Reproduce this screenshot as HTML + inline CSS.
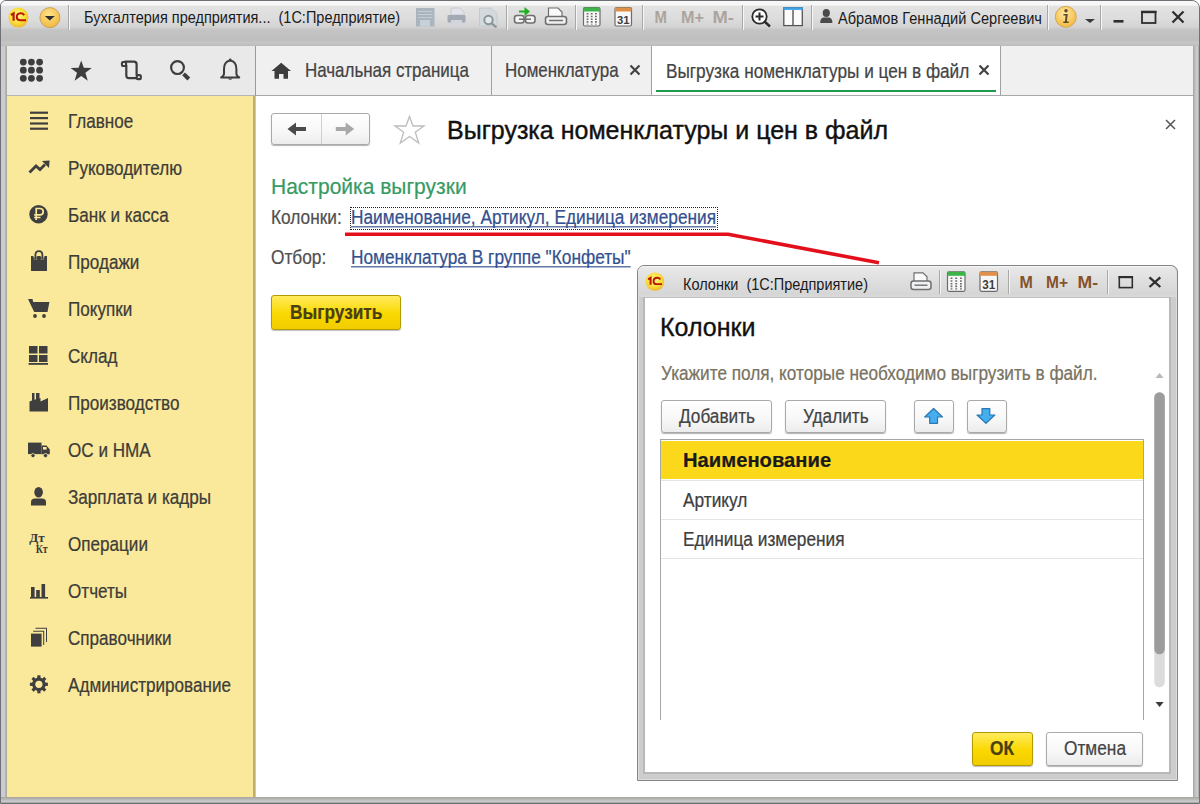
<!DOCTYPE html>
<html><head><meta charset="utf-8">
<style>
*{box-sizing:border-box;margin:0;padding:0}
html,body{width:1200px;height:804px;overflow:hidden;background:#fff}
body{position:relative;font-family:"Liberation Sans",sans-serif;color:#4a4a4a}
.abs{position:absolute}
.t{position:absolute;white-space:pre;line-height:1;transform:scaleY(1.14);transform-origin:0 0;-webkit-text-stroke:0.2px currentColor}
/* window frame */
#frame{left:0;top:0;width:1200px;height:804px;background:#c8c8cc;border:1px solid #6e7076;border-radius:6px 8px 0 0}
#titlebar{left:1px;top:1px;width:1198px;height:45px;background:linear-gradient(#f8f8f8 0px,#f6f6f6 4px,#e3e3e3 5.5px,#dcdcdc 18px,#d3d3d3 26px,#c4c4c4 29px,#bebebe 39px,#c6c6c6 41.5px,#bcbcbc 45px);border-radius:5px 7px 0 0}
#toolpanel{left:7px;top:46px;width:248px;height:50px;background:#e9e9e9;border-bottom:1px solid #b5b5b5}
#tabbar{left:255px;top:46px;width:939px;height:50px;background:#f0f0f0;border-bottom:1px solid #a8a8a8;border-left:1px solid #9a9a9a}
#sidebar{left:7px;top:96px;width:248px;height:701px;background:#fae99b;border-right:2px solid #bdb06c}
#content{left:256px;top:96px;width:938px;height:701px;background:#fff}
.tab{position:absolute;top:0;height:49px;border-right:1px solid #9c9c9c}
.sb{position:absolute;left:68px;font-size:17.1px;color:#3d3c38}
.sbi{position:absolute;left:28px}
.btn{position:absolute;border:1px solid #a9a9a9;border-radius:3px;background:linear-gradient(#ffffff,#f7f7f7 60%,#ececec);box-shadow:0 1px 1px rgba(0,0,0,.3)}
.ybtn{position:absolute;border:1px solid #b49a00;border-radius:3px;background:linear-gradient(#ffeb5c,#fad800 55%,#f1cc00);box-shadow:0 1px 1px rgba(0,0,0,.25)}
.link{color:#33508f;text-decoration:underline;text-decoration-skip-ink:none;text-decoration-thickness:1px;text-underline-offset:2px}
</style></head><body>
<div id="frame" class="abs"></div>
<div id="titlebar" class="abs"></div>
<div id="toolpanel" class="abs"></div>
<div id="tabbar" class="abs"></div>
<div id="sidebar" class="abs"></div>
<div id="content" class="abs"></div>
<div class="abs" style="left:1px;top:46px;width:6px;height:757px;background:linear-gradient(to right,#cbcbd3 0,#cbcbd3 3.5px,#b9b7ac 4.5px,#a8a592 6px)"></div>
<div class="abs" style="left:1193px;top:46px;width:6px;height:757px;background:linear-gradient(to right,#a4a4a4 0,#c4c4c4 2.5px,#d0d0d0 5px,#8c8c8c 6px)"></div>
<div class="abs" style="left:1px;top:797px;width:1198px;height:6px;background:linear-gradient(#a9a59b 0,#b5b5b5 2px,#c9c9c9 4px,#c9c9c9 5px,#8a8a8a 6px)"></div>



<!-- toolbar panel icons -->
<svg class="abs" style="left:15px;top:54px" width="34" height="34" viewBox="15 54 34 34">
  <g fill="#3d3d3d">
  <circle cx="23.3" cy="62.1" r="3.4"/><circle cx="31.4" cy="62.1" r="3.4"/><circle cx="39.6" cy="62.1" r="3.4"/>
  <circle cx="23.3" cy="70.2" r="3.4"/><circle cx="31.4" cy="70.2" r="3.4"/><circle cx="39.6" cy="70.2" r="3.4"/>
  <circle cx="23.3" cy="78.3" r="3.4"/><circle cx="31.4" cy="78.3" r="3.4"/><circle cx="39.6" cy="78.3" r="3.4"/>
  </g>
</svg>
<svg class="abs" style="left:66px;top:56px" width="30" height="30" viewBox="66 56 30 30">
  <polygon fill="#3d3d3d" points="81.2,60.4 83.8,67.8 91.8,67.9 85.4,72.8 87.8,80.8 81.2,76.0 74.6,80.8 77.0,72.8 70.6,67.9 78.6,67.8"/>
</svg>
<svg class="abs" style="left:116px;top:56px" width="30" height="30" viewBox="116 56 30 30">
  <g fill="none" stroke="#3d3d3d" stroke-width="2.2" stroke-linejoin="round">
   <path d="M124.5,61.7 L134,61.7 Q136.6,61.7 136.6,64.3 L136.6,75.5"/>
   <path d="M126.3,65 L126.3,75.6 Q126.3,78.2 128.9,78.2 L137,78.2"/>
   <rect x="122" y="62" width="4" height="4" rx="1.1" fill="#f6f6f6"/>
   <rect x="136.8" y="75.2" width="4" height="4" rx="1.1" fill="#f6f6f6"/>
  </g>
</svg>
<svg class="abs" style="left:165px;top:56px" width="30" height="30" viewBox="165 56 30 30">
  <circle cx="177.5" cy="67.6" r="6.4" fill="none" stroke="#3d3d3d" stroke-width="2.2"/>
  <line x1="183.6" y1="73.8" x2="188.8" y2="79" stroke="#3d3d3d" stroke-width="4"/>
</svg>
<svg class="abs" style="left:215px;top:56px" width="30" height="30" viewBox="215 56 30 30">
  <path d="M230.2,60.5 Q224,61.5 224,69 L224,73.5 Q224,76 221.2,77.5 L239.2,77.5 Q236.4,76 236.4,73.5 L236.4,69 Q236.4,61.5 230.2,60.5 Z" fill="none" stroke="#3d3d3d" stroke-width="2" stroke-linejoin="round"/>
  <circle cx="230.2" cy="59.8" r="1.3" fill="#3d3d3d"/>
  <path d="M227.8,78.5 Q230.2,81.2 232.6,78.5 Z" fill="#3d3d3d"/>
</svg>
<!-- home icon in tab -->
<svg class="abs" style="left:268px;top:58px" width="26" height="24" viewBox="268 58 26 24">
  <path d="M281.2,62.7 L291,71 L288,71 L288,78.8 L283.5,78.8 L283.5,74 L279,74 L279,78.8 L274.5,78.8 L274.5,71 L271.5,71 Z" fill="#3d3d3d"/>
</svg>


<!-- title bar icons -->
<svg class="abs" style="left:0;top:0" width="1200" height="46" viewBox="0 0 1200 46">
  <defs>
    <radialGradient id="g1c" cx="0.45" cy="0.4" r="0.6">
      <stop offset="0" stop-color="#fff7a0"/><stop offset="0.6" stop-color="#fbe03a"/><stop offset="1" stop-color="#f0b830"/>
    </radialGradient>
    <radialGradient id="gdd" cx="0.45" cy="0.35" r="0.65">
      <stop offset="0" stop-color="#ffe38a"/><stop offset="1" stop-color="#f2b840"/>
    </radialGradient>
    <radialGradient id="ginfo" cx="0.45" cy="0.35" r="0.65">
      <stop offset="0" stop-color="#ffeaa0"/><stop offset="1" stop-color="#f4b840"/>
    </radialGradient>
  </defs>
  <!-- 1C logo -->
  <circle cx="18.4" cy="17.6" r="10" fill="url(#g1c)"/>
  <g fill="none" stroke="#b81a00" stroke-linecap="butt">
    <path d="M11,15 L13.6,13.4 L13.6,20.8" stroke-width="2.2"/>
    <path d="M24.2,15.2 Q23,13.2 20.6,13.3 Q16.8,13.5 16.8,17 Q16.8,20.3 20.3,20.3 L26,20.3" stroke-width="2"/>
  </g>
  <!-- dropdown circle -->
  <circle cx="49.9" cy="17.6" r="10" fill="url(#gdd)" stroke="#c9a15a" stroke-width="1"/>
  <polygon points="44.8,16 54.8,16 49.8,20.5" fill="#2e2e2e"/>
  <!-- separators -->
  <g stroke="#a8a8a8" stroke-width="1">
    <line x1="68.5" y1="5" x2="68.5" y2="30"/>
    <line x1="506.5" y1="5" x2="506.5" y2="30"/>
    <line x1="575.5" y1="5" x2="575.5" y2="30"/>
    <line x1="642.5" y1="5" x2="642.5" y2="30"/>
    <line x1="742.5" y1="5" x2="742.5" y2="30"/>
    <line x1="811.5" y1="5" x2="811.5" y2="30"/>
    <line x1="1047.5" y1="5" x2="1047.5" y2="30"/>
    <line x1="1100.5" y1="5" x2="1100.5" y2="30"/>
  </g>
  <g stroke="#f6f6f6" stroke-width="1">
    <line x1="69.5" y1="5" x2="69.5" y2="30"/>
    <line x1="507.5" y1="5" x2="507.5" y2="30"/>
    <line x1="576.5" y1="5" x2="576.5" y2="30"/>
    <line x1="643.5" y1="5" x2="643.5" y2="30"/>
    <line x1="743.5" y1="5" x2="743.5" y2="30"/>
    <line x1="812.5" y1="5" x2="812.5" y2="30"/>
    <line x1="1048.5" y1="5" x2="1048.5" y2="30"/>
    <line x1="1101.5" y1="5" x2="1101.5" y2="30"/>
  </g>
  <!-- disabled save -->
  <g>
    <rect x="416" y="8" width="18.5" height="18.5" fill="#a9b5be"/>
    <g stroke="#c6ced4" stroke-width="1"><line x1="418" y1="11.5" x2="432.5" y2="11.5"/><line x1="418" y1="14.5" x2="432.5" y2="14.5"/><line x1="418" y1="17.5" x2="432.5" y2="17.5"/></g>
    <rect x="420" y="20" width="10" height="6.5" fill="#c9d0d6"/>
    <!-- print -->
    <path d="M451,8 L460,8 L464,12 L464,15 L451,15 Z" fill="#e2e2ea" stroke="#c4c4cc" stroke-width="0.8"/>
    <rect x="447.5" y="15" width="18" height="7.5" rx="1" fill="#a3aab4"/>
    <rect x="451" y="20" width="11" height="6" fill="#d2d6dc"/>
    <!-- preview -->
    <path d="M479.5,8 L491,8 L497,13.5 L497,26 L479.5,26 Z" fill="#d3d9dc" stroke="#bfc6ca" stroke-width="0.8"/>
    <circle cx="488.5" cy="20" r="4.2" fill="#e4e8ea" stroke="#8a9599" stroke-width="1.9"/>
    <line x1="491.5" y1="23.2" x2="496.5" y2="27.5" stroke="#8a9599" stroke-width="2.2"/>
  </g>
  <!-- link green -->
  <path d="M519,10.5 L524.5,10.5 L524.5,7 L530,11.5 L524.5,16 L524.5,12.5 L519,12.5 Z" fill="#1fae1f"/>
  <rect x="514.5" y="15.5" width="9.5" height="7.5" rx="2.5" fill="#f4f4f4" stroke="#6f6f6f" stroke-width="1.6"/>
  <rect x="525.5" y="15.5" width="9.5" height="7.5" rx="2.5" fill="#f4f4f4" stroke="#6f6f6f" stroke-width="1.6"/>
  <line x1="519" y1="19.2" x2="531" y2="19.2" stroke="#6f6f6f" stroke-width="1.6"/>
  <!-- doc link -->
  <path d="M548.5,8 L558,8 L562,12 L562,18 L548.5,18 Z" fill="#fafafa" stroke="#6f6f6f" stroke-width="1.2"/>
  <rect x="545.5" y="16.5" width="21" height="8" rx="2.5" fill="#f0f0f0" stroke="#6f6f6f" stroke-width="1.6"/>
  <line x1="549" y1="20.5" x2="563" y2="20.5" stroke="#6f6f6f" stroke-width="1.5"/>
  <!-- calendar green -->
  <rect x="583.5" y="7.5" width="16.5" height="18.5" rx="1.5" fill="#f8f8f8" stroke="#6b6b6b" stroke-width="1.2"/>
  <rect x="583.5" y="7.5" width="16.5" height="4" fill="#3cb44a"/>
  <g stroke="#6a6a6a" stroke-width="1.8" stroke-dasharray="1.6 1.1">
    <line x1="587.5" y1="13" x2="587.5" y2="24.5"/><line x1="591.7" y1="13" x2="591.7" y2="24.5"/><line x1="595.9" y1="13" x2="595.9" y2="24.5"/>
  </g>
  <!-- calendar 31 -->
  <rect x="615" y="7.5" width="16.5" height="18.5" rx="1.5" fill="#f8f8f8" stroke="#6b6b6b" stroke-width="1.2"/>
  <rect x="615" y="7.5" width="16.5" height="4" fill="#e0904a"/>
  <text x="617" y="24" font-family="Liberation Sans" font-weight="bold" font-size="11.5" fill="#3e3e3e" textLength="12.5" lengthAdjust="spacingAndGlyphs">31</text>
  <!-- M M+ M- disabled -->
  <g fill="#aca49c" font-family="Liberation Sans" font-weight="bold" font-size="15" transform="translate(0,23) scale(1,1.15) translate(0,-23)">
    <text x="654.5" y="23" textLength="12.5" lengthAdjust="spacingAndGlyphs">M</text>
    <text x="681" y="23" textLength="23" lengthAdjust="spacingAndGlyphs">M+</text>
    <text x="712.5" y="23" textLength="21.5" lengthAdjust="spacingAndGlyphs">M-</text>
  </g>
  <!-- zoom -->
  <circle cx="759.5" cy="16.5" r="7.2" fill="#fff" stroke="#2a2a2a" stroke-width="1.8"/>
  <path d="M755.5,16.5 L763.5,16.5 M759.5,12.5 L759.5,20.5" stroke="#2a2a2a" stroke-width="2"/>
  <line x1="764.5" y1="21.5" x2="770" y2="26.5" stroke="#2a2a2a" stroke-width="2.4"/>
  <!-- panel -->
  <rect x="783.8" y="7.8" width="18.5" height="17.8" fill="#fbfbfb" stroke="#555" stroke-width="1.3"/>
  <rect x="783.3" y="7.3" width="19.5" height="2.6" fill="#3ba0e6"/>
  <line x1="793" y1="10" x2="793" y2="25.5" stroke="#555" stroke-width="1.4"/>
  <!-- user -->
  <ellipse cx="826.3" cy="13" rx="3.6" ry="4" fill="#4a4a4a"/>
  <path d="M820.2,23 Q820.2,17.5 824,17.5 L828.6,17.5 Q832.4,17.5 832.4,23 Z" fill="#4a4a4a"/>
  <!-- info -->
  <circle cx="1065.8" cy="16.8" r="10.5" fill="url(#ginfo)" stroke="#d1a85a" stroke-width="1"/>
  <circle cx="1066" cy="10.8" r="1.7" fill="#5a4a2a"/>
  <path d="M1063.5,14 L1067.8,14 L1066.8,21.5 L1068.8,21.5 L1068.5,23 L1063.2,23 L1063.5,21.5 L1065,21.5 L1065.6,15.5 L1063.3,15.5 Z" fill="#5a4a2a"/>
  <!-- dropdown small -->
  <polygon points="1085,19 1095,19 1090,23" fill="#3a3a3a"/>
  <!-- minimize/maximize/close -->
  <rect x="1113.5" y="20" width="10" height="2.6" fill="#2e2e2e"/>
  <rect x="1142" y="11.8" width="13.5" height="11.2" fill="none" stroke="#2e2e2e" stroke-width="1.8"/>
  <rect x="1141" y="10.8" width="15.5" height="2.4" fill="#2e2e2e"/>
  <path d="M1172.5,11.5 L1183.5,22.5 M1183.5,11.5 L1172.5,22.5" stroke="#2e2e2e" stroke-width="2.3"/>
</svg>

<!-- title bar contents -->
<div class="t" style="left:84px;top:9px;font-size:14.5px;color:#1a1a1a;-webkit-text-stroke:0">Бухгалтерия предприятия...  (1С:Предприятие)</div>
<div class="t" style="left:838px;top:9.5px;font-size:14.6px;color:#1a1a1a;-webkit-text-stroke:0">Абрамов Геннадий Сергеевич</div>


<!-- tab structure -->
<div class="abs" style="left:652px;top:46px;width:348px;height:49px;background:#fff"></div>
<div class="abs" style="left:491px;top:46px;width:1px;height:49px;background:#a0a0a0"></div>
<div class="abs" style="left:651px;top:46px;width:1px;height:49px;background:#a0a0a0"></div>
<div class="abs" style="left:1000px;top:46px;width:1px;height:49px;background:#a0a0a0"></div>
<div class="abs" style="left:656px;top:90px;width:340px;height:2px;background:#1e9a50"></div>
<svg class="abs" style="left:620px;top:55px" width="400" height="30" viewBox="620 55 400 30">
  <path d="M630.5,65.5 L639.5,74.5 M639.5,65.5 L630.5,74.5" stroke="#444" stroke-width="2.2"/>
  <path d="M979.5,65.5 L988.5,74.5 M988.5,65.5 L979.5,74.5" stroke="#444" stroke-width="2.2"/>
</svg>

<!-- tabs -->
<div class="t" style="left:505px;top:62px;font-size:16.95px;color:#444">Номенклатура</div>
<div class="t" style="left:305px;top:62px;font-size:16.95px;color:#444">Начальная страница</div>
<div class="t" style="left:666px;top:62px;font-size:17.2px;color:#444">Выгрузка номенклатуры и цен в файл</div>


<!-- sidebar icons -->
<svg class="abs" style="left:20px;top:100px" width="40" height="610" viewBox="20 100 40 610">
 <g fill="#3f3f3f">
  <!-- hamburger -->
  <rect x="30" y="111.6" width="18" height="2.2"/>
  <rect x="30" y="117" width="18" height="2.2"/>
  <rect x="30" y="122.4" width="18" height="2.2"/>
  <rect x="30" y="127.6" width="18" height="2.2"/>
  <!-- trend -->
  <path d="M29.5,172.5 L36,166 L40,169.6 L45,164.6" fill="none" stroke="#3f3f3f" stroke-width="2.8" stroke-linejoin="miter"/>
  <polygon points="42,161 49.6,160.4 49,168"/>
  <!-- ruble -->
  <circle cx="38.5" cy="214.2" r="9.2"/>
  <!-- bag -->
  <rect x="31" y="256" width="16" height="15"/>
  <path d="M35.4,259.6 L35.4,255 Q35.4,251.2 38.9,251.2 Q42.4,251.2 42.4,255 L42.4,259.6" fill="none" stroke="#fae99b" stroke-width="4"/>
  <path d="M35.4,259.6 L35.4,255 Q35.4,251.2 38.9,251.2 Q42.4,251.2 42.4,255 L42.4,259.6" fill="none" stroke="#3f3f3f" stroke-width="1.8"/>
  <rect x="32.5" y="257.5" width="2" height="2"/><rect x="36.5" y="256.5" width="4.8" height="3"/><rect x="43.5" y="257.5" width="2" height="2"/>
  <!-- cart -->
  <path d="M28,299 L32.5,299 L33.2,302 L49.4,302 L47.5,312 L34.2,312 Z"/>
  <rect x="33.5" y="312" width="14.5" height="1.6" fill="#fae99b"/>
  <circle cx="35" cy="316" r="1.9"/><circle cx="44" cy="316" r="1.9"/>
  <!-- warehouse -->
  <rect x="29" y="346" width="8.5" height="7.5"/><rect x="39" y="346" width="8.5" height="7.5"/>
  <rect x="29" y="355" width="8.5" height="7"/><rect x="39" y="355" width="8.5" height="7"/>
  <rect x="28.6" y="363" width="19.4" height="1.8"/>
  <!-- factory -->
  <path d="M29.5,411.5 L29.5,401.5 L32,400.5 L32,393 L34.5,393 L34.5,399.8 L36,399.2 L36,393 L39.5,393 L39.5,398.5 L40.5,398 L40.5,401.5 L48,398 L48,411.5 Z"/>
  <!-- truck -->
  <rect x="28" y="442.6" width="13.5" height="11.5"/>
  <path d="M41.5,445.5 L46.5,445.5 L49.8,449.5 L49.8,454.2 L41.5,454.2 Z"/>
  <rect x="43" y="447" width="3.6" height="2.6" fill="#fae99b"/>
  <circle cx="33" cy="455.6" r="2.1" stroke="#fae99b" stroke-width="0.8"/>
  <circle cx="45.5" cy="455.6" r="2.1" stroke="#fae99b" stroke-width="0.8"/>
  <!-- person -->
  <ellipse cx="38.6" cy="492.3" rx="4.3" ry="5.3"/>
  <path d="M31,505.5 L31,502 Q31,498.4 35,498.4 L42,498.4 Q46,498.4 46,502 L46,505.5 Z"/>
  <!-- chart -->
  <rect x="31" y="587" width="3.6" height="10.5"/>
  <rect x="36.2" y="590" width="3.6" height="7.5"/>
  <rect x="41.5" y="584" width="3.6" height="13.5"/>
  <rect x="30" y="597" width="18" height="1.6"/>
  <!-- books -->
  <path d="M35.5,627.8 L47,627.8 L47,642 L46,642 L46,628.8 L35.5,628.8 Z"/>
  <path d="M33.2,630.8 L44.2,630.8 L44.2,645 L43.2,645 L43.2,631.8 L33.2,631.8 Z"/>
  <rect x="31" y="633.6" width="10.6" height="13"/>
  <!-- gear -->
  <g transform="translate(38.9,684.3)">
    <circle r="6.8"/>
    <g>
    <rect x="-1.6" y="-9" width="3.2" height="4"/>
    <rect x="-1.6" y="-9" width="3.2" height="4" transform="rotate(45)"/>
    <rect x="-1.6" y="-9" width="3.2" height="4" transform="rotate(90)"/>
    <rect x="-1.6" y="-9" width="3.2" height="4" transform="rotate(135)"/>
    <rect x="-1.6" y="-9" width="3.2" height="4" transform="rotate(180)"/>
    <rect x="-1.6" y="-9" width="3.2" height="4" transform="rotate(225)"/>
    <rect x="-1.6" y="-9" width="3.2" height="4" transform="rotate(270)"/>
    <rect x="-1.6" y="-9" width="3.2" height="4" transform="rotate(315)"/>
    </g>
    <circle r="3.6" fill="#fae99b"/>
  </g>
 </g>
 <!-- ruble sign -->
 <path d="M36.2,220 L36.2,208.5 L40,208.5 Q43.2,208.5 43.2,211.7 Q43.2,214.9 40,214.9 L34.2,214.9 M34.2,217.5 L40.5,217.5" fill="none" stroke="#fae99b" stroke-width="1.7"/>
 <!-- Dt Kt -->
 <text x="29.3" y="542.2" font-family="Liberation Serif" font-weight="bold" font-size="12.2" fill="#3a3a3a" textLength="15.5" lengthAdjust="spacingAndGlyphs">Дт</text>
 <text x="35.8" y="552.8" font-family="Liberation Serif" font-weight="bold" font-size="12.2" fill="#3a3a3a" textLength="11.8" lengthAdjust="spacingAndGlyphs">Кт</text>
</svg>

<!-- sidebar items -->
<div class="sb t" style="top:112px">Главное</div>
<div class="sb t" style="top:159px">Руководителю</div>
<div class="sb t" style="top:206px">Банк и касса</div>
<div class="sb t" style="top:253px">Продажи</div>
<div class="sb t" style="top:300px">Покупки</div>
<div class="sb t" style="top:347px">Склад</div>
<div class="sb t" style="top:394px">Производство</div>
<div class="sb t" style="top:441px">ОС и НМА</div>
<div class="sb t" style="top:488px">Зарплата и кадры</div>
<div class="sb t" style="top:535px">Операции</div>
<div class="sb t" style="top:582px">Отчеты</div>
<div class="sb t" style="top:629px">Справочники</div>
<div class="sb t" style="top:676px">Администрирование</div>


<!-- content nav -->
<div class="btn" style="left:271px;top:113px;width:99px;height:32px;border-radius:3px"></div>
<div class="abs" style="left:321px;top:114px;width:1px;height:30px;background:#cfcfcf"></div>
<svg class="abs" style="left:271px;top:113px" width="160" height="35" viewBox="271 113 160 35">
  <path d="M295,129 L306,129" stroke="#4a4a4a" stroke-width="4"/>
  <polygon points="287.5,129 296,122.5 296,135.5" fill="#4a4a4a"/>
  <path d="M335.8,129 L346.5,129" stroke="#a8a8a8" stroke-width="4"/>
  <polygon points="354.2,129 345.7,122.5 345.7,135.5" fill="#a8a8a8"/>
  <polygon fill="none" stroke="#bdbdbd" stroke-width="1.3" stroke-linejoin="miter" points="409.5,116.5 413,126 424,126 415.3,132.3 418.7,143 409.5,136.5 400.3,143 403.7,132.3 395,126 406,126"/>
</svg>
<svg class="abs" style="left:1160px;top:115px" width="20" height="20" viewBox="1160 115 20 20">
  <path d="M1166,120 L1175,129 M1175,120 L1166,129" stroke="#555" stroke-width="1.5"/>
</svg>

<!-- content -->
<div class="t" style="left:447px;top:118px;font-size:25px;color:#111;-webkit-text-stroke:0.4px currentColor;transform:none">Выгрузка номенклатуры и цен в файл</div>
<div class="t" style="left:271px;top:175px;font-size:21px;color:#379a63;transform:scaleY(1.07)">Настройка выгрузки</div>
<div class="t" style="left:271px;top:208px;font-size:17.3px;color:#505050">Колонки:</div>
<div class="abs" style="left:349.5px;top:207px;width:368px;height:22.5px;border:1px dotted #222"></div>
<div class="t link" style="left:351px;top:208px;font-size:17.3px">Наименование, Артикул, Единица измерения</div>
<div class="t" style="left:271px;top:248px;font-size:17.3px;color:#505050">Отбор:</div>
<div class="t link" style="left:351px;top:248px;font-size:17.3px">Номенклатура В группе "Конфеты"</div>
<div class="ybtn" style="left:271px;top:295px;width:130px;height:35px"></div>
<div class="t" style="left:290px;top:303px;font-size:17.3px;font-weight:bold;color:#4a3f10">Выгрузить</div>


<!-- red annotation -->
<svg class="abs" style="left:0;top:0" width="1200" height="804" viewBox="0 0 1200 804">
  <path d="M345,234.2 L728,234.2 L879,262.8" fill="none" stroke="#e3101c" stroke-width="3.6" stroke-linejoin="round"/>
</svg>
<!-- dialog -->
<div class="abs" style="left:636.5px;top:264.5px;width:541px;height:516px;border:1.5px solid #858585;border-radius:7px 7px 0 0;background:#cdcdcd;box-shadow:inset 1px 0 0 #dedede,inset -1px -1px 0 #dcdcdc"></div>
<div class="abs" style="left:638px;top:266px;width:538px;height:31px;border-radius:6px 6px 0 0;background:linear-gradient(#f6f6f6 0,#e8e8e8 2px,#dfdfdf 14px,#d6d6d6 28px,#dadada 31px)"></div>
<div class="abs" style="left:642.5px;top:297px;width:528.5px;height:477px;background:#fff;border:2px solid #b8b8b8;border-top:1px solid #c0c0c0"></div>


<!-- dialog titlebar icons -->
<svg class="abs" style="left:637px;top:265px" width="540" height="33" viewBox="637 265 540 33">
  <defs>
    <radialGradient id="g1cd" cx="0.45" cy="0.4" r="0.6">
      <stop offset="0" stop-color="#fff7a0"/><stop offset="0.6" stop-color="#fbe03a"/><stop offset="1" stop-color="#f0b830"/>
    </radialGradient>
  </defs>
  <circle cx="655" cy="281.7" r="9.3" fill="url(#g1cd)"/>
  <g fill="none" stroke="#b81a00" stroke-linecap="butt" transform="translate(655,281.7) scale(0.92) translate(-18.4,-17.6)">
    <path d="M11,15 L13.6,13.4 L13.6,20.8" stroke-width="2.2"/>
    <path d="M24.2,15.2 Q23,13.2 20.6,13.3 Q16.8,13.5 16.8,17 Q16.8,20.3 20.3,20.3 L26,20.3" stroke-width="2"/>
  </g>
  <!-- doc link -->
  <path d="M914,272.8 L923,272.8 L927,276.8 L927,282 L914,282 Z" fill="#fafafa" stroke="#6f6f6f" stroke-width="1.2"/>
  <rect x="911" y="281" width="20" height="8.5" rx="2.5" fill="#eef0f2" stroke="#6f6f6f" stroke-width="1.5"/>
  <line x1="914.5" y1="285.2" x2="927.5" y2="285.2" stroke="#6f6f6f" stroke-width="1.4"/>
  <g stroke="#a8a8a8" stroke-width="1">
    <line x1="939.5" y1="270" x2="939.5" y2="294"/>
    <line x1="1008.5" y1="270" x2="1008.5" y2="294"/>
    <line x1="1107.5" y1="270" x2="1107.5" y2="294"/>
  </g>
  <g stroke="#f4f4f4" stroke-width="1">
    <line x1="940.5" y1="270" x2="940.5" y2="294"/>
    <line x1="1009.5" y1="270" x2="1009.5" y2="294"/>
    <line x1="1108.5" y1="270" x2="1108.5" y2="294"/>
  </g>
  <!-- calendar green -->
  <rect x="947.5" y="271.8" width="17.5" height="19.5" rx="1.5" fill="#f8f8f8" stroke="#6b6b6b" stroke-width="1.2"/>
  <rect x="947.5" y="271.8" width="17.5" height="4" fill="#3cb44a"/>
  <g stroke="#6a6a6a" stroke-width="1.8" stroke-dasharray="1.6 1.1">
    <line x1="951.5" y1="277.5" x2="951.5" y2="289.5"/><line x1="956.2" y1="277.5" x2="956.2" y2="289.5"/><line x1="960.9" y1="277.5" x2="960.9" y2="289.5"/>
  </g>
  <!-- calendar 31 -->
  <rect x="980" y="271.8" width="17.5" height="19.5" rx="1.5" fill="#f8f8f8" stroke="#6b6b6b" stroke-width="1.2"/>
  <rect x="980" y="271.8" width="17.5" height="4" fill="#e0904a"/>
  <text x="982.3" y="289" font-family="Liberation Sans" font-weight="bold" font-size="12" fill="#3e3e3e" textLength="13" lengthAdjust="spacingAndGlyphs">31</text>
  <g fill="#85522a" font-family="Liberation Sans" font-weight="bold" font-size="14" transform="translate(0,287.6) scale(1,1.12) translate(0,-287.6)">
    <text x="1019.5" y="287.6" textLength="13.4" lengthAdjust="spacingAndGlyphs">M</text>
    <text x="1046" y="287.6" textLength="22" lengthAdjust="spacingAndGlyphs">M+</text>
    <text x="1077.5" y="287.6" textLength="20.5" lengthAdjust="spacingAndGlyphs">M-</text>
  </g>
  <rect x="1119.3" y="276.8" width="13" height="10.8" fill="none" stroke="#2e2e2e" stroke-width="1.6"/>
  <rect x="1118.6" y="276" width="14.4" height="2.2" fill="#2e2e2e"/>
  <path d="M1149.5,277.3 L1160.3,287 M1160.3,277.3 L1149.5,287" stroke="#2e2e2e" stroke-width="2.3"/>
</svg>
<div class="t" style="left:683px;top:275.5px;font-size:14.5px;color:#1a1a1a;-webkit-text-stroke:0">Колонки  (1С:Предприятие)</div>
<div class="t" style="left:660px;top:314.5px;font-size:25px;color:#111;-webkit-text-stroke:0.35px currentColor;transform:none">Колонки</div>
<div class="t" style="left:661px;top:364.3px;font-size:17.2px;color:#78725f">Укажите поля, которые необходимо выгрузить в файл.</div>
<div class="btn" style="left:661px;top:400px;width:111px;height:33px"></div>
<div class="btn" style="left:785px;top:400px;width:101px;height:33px"></div>
<div class="btn" style="left:914px;top:400px;width:40px;height:33px"></div>
<div class="btn" style="left:967px;top:400px;width:40px;height:33px"></div>
<div class="t" style="left:679px;top:407px;font-size:17.2px;color:#444">Добавить</div>
<div class="t" style="left:803px;top:407px;font-size:17.2px;color:#444">Удалить</div>
<svg class="abs" style="left:914px;top:400px" width="100" height="34" viewBox="914 400 100 34">
  <path d="M933.6,408.5 L942.5,417 L937.5,417 L937.5,423.3 L929.7,423.3 L929.7,417 L924.7,417 Z" fill="#44aef0" stroke="#2a78b0" stroke-width="1.2" stroke-linejoin="round"/>
  <path d="M986,423.3 L994.8,415 L989.8,415 L989.8,408.6 L982,408.6 L982,415 L977,415 Z" fill="#44aef0" stroke="#2a78b0" stroke-width="1.2" stroke-linejoin="round"/>
</svg>
<!-- table -->
<div class="abs" style="left:660px;top:439px;width:484px;height:281px;border:1px solid #a6a6a6;border-bottom:none;background:#fff"></div>
<div class="abs" style="left:661px;top:441px;width:482px;height:38px;background:#fbd81a"></div>
<div class="abs" style="left:661px;top:480px;width:482px;height:1px;background:#e4e4e4"></div>
<div class="abs" style="left:661px;top:519px;width:482px;height:1px;background:#e4e4e4"></div>
<div class="abs" style="left:661px;top:558px;width:482px;height:1px;background:#e4e4e4"></div>
<div class="t" style="left:683px;top:450px;font-size:20.2px;font-weight:bold;color:#1a1a1a;transform:none;-webkit-text-stroke:0.2px currentColor">Наименование</div>
<div class="t" style="left:683px;top:491px;font-size:17.3px;color:#3e3e3e">Артикул</div>
<div class="t" style="left:683px;top:529.5px;font-size:17.3px;color:#3e3e3e">Единица измерения</div>
<!-- scrollbar -->
<svg class="abs" style="left:1150px;top:368px" width="20" height="345" viewBox="1150 368 20 345">
  <polygon points="1155.5,378 1163.6,378 1159.55,373" fill="#b8b8b8"/>
  <rect x="1154.3" y="392.3" width="10.5" height="295" rx="5.2" fill="#dcdcdc"/>
  <rect x="1154.3" y="392.3" width="10.5" height="262" rx="5.2" fill="#9c9c9c"/>
  <polygon points="1155.5,702 1163.6,702 1159.55,707" fill="#3a3a3a"/>
</svg>
<div class="ybtn" style="left:972px;top:732px;width:61px;height:34px"></div>
<div class="btn" style="left:1046px;top:732px;width:97px;height:34px"></div>
<div class="t" style="left:990px;top:739px;font-size:17.3px;font-weight:bold;color:#4a3f10">ОК</div>
<div class="t" style="left:1064px;top:739px;font-size:17.3px;color:#444">Отмена</div>

</body></html>
